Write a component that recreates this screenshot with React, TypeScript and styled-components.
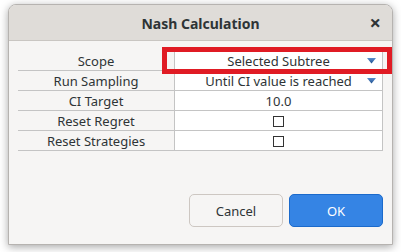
import React from 'react';
import styled, { createGlobalStyle } from 'styled-components';

const color = {
	'header': '#dfdcd8',
	'body': '#f6f5f4',
	'grid': '#c4c4c4',
	'text': '#2e3436',
	'blue': '#3584e4',
	'red': '#e01b24',
};

const Global = createGlobalStyle`
	html, body {
		margin: 0;
		padding: 0;
		background: #ffffff;
	}
	body {
		font-family: "Noto Sans", "Open Sans", sans-serif;
		color: ${ color.text };
	}
`;

const Page = styled.div`
	width: 401px;
	height: 252px;
	padding: 4px 0px 0px 8px;
	box-sizing: border-box;
`;

const Dialog = styled.div`
	position: relative;
	display: flex;
	flex-direction: column;
	width: 385px;
	height: 241px;
	box-sizing: border-box;
	border: 1px solid #b6b3b0;
	border-radius: 8px 8px 0px 0px;
	background-color: ${ color.body };
	box-shadow: 0px 2px 8px rgba(0, 0, 0, 0.35);
	overflow: hidden;
`;

const Header = styled.div`
	position: relative;
	display: flex;
	align-items: center;
	justify-content: center;
	height: 36px;
	padding-top: 1px;
	box-sizing: border-box;
	flex: none;
	background-color: ${ color.header };
	border-bottom: 1px solid #c9c6c2;
	font-size: 14px;
	font-weight: bold;
	color: #2e3436;
`;

const Close = styled.span`
	position: absolute;
	right: 11px;
	top: 8px;
	font-size: 20px;
	line-height: 20px;
	font-weight: bold;
	color: #2e3436;
`;

const Body = styled.div`
	display: flex;
	flex-direction: column;
	flex: 1;
	padding: 10px 9px 17px 9px;
`;

const Table = styled.div`
	display: grid;
	grid-template-columns: 156px 209px;
	grid-auto-rows: 20px;
`;

const Label = styled.div`
	display: flex;
	align-items: center;
	justify-content: center;
	padding-top: 1px;
	box-sizing: border-box;
	border-bottom: 1px solid ${ color.grid };
	font-size: 13px;
	line-height: 13px;
`;

const Value = styled.div<{ $first?: boolean }>`
	position: relative;
	display: flex;
	align-items: center;
	justify-content: center;
	padding-top: 1px;
	box-sizing: border-box;
	background-color: #ffffff;
	border-left: 1px solid ${ color.grid };
	border-right: 1px solid ${ color.grid };
	border-bottom: 1px solid ${ color.grid };
	border-top: ${ (p) => p.$first ? `1px solid ${ color.grid }` : 'none' };
	font-size: 13px;
	line-height: 13px;
`;

const Arrow = styled.svg`
	position: absolute;
	right: 6px;
	top: 50%;
	margin-top: -3px;
`;

const Check = styled.span`
	display: block;
	width: 11px;
	height: 11px;
	box-sizing: border-box;
	border: 1px solid #333333;
	background: #ffffff;
`;

const Buttons = styled.div`
	display: flex;
	justify-content: flex-end;
	gap: 6px;
	margin-top: auto;
`;

const Button = styled.div<{ $primary?: boolean }>`
	display: flex;
	align-items: center;
	justify-content: center;
	width: 94px;
	height: 33px;
	box-sizing: border-box;
	border-radius: 5px;
	font-size: 13px;
	border: 1px solid ${ (p) => p.$primary ? '#1b6acb' : '#cdc7c2' };
	background: ${ (p) => p.$primary ? color.blue : '#f6f5f4' };
	color: ${ (p) => p.$primary ? '#ffffff' : color.text };
`;

const Highlight = styled.div`
	position: absolute;
	left: 153px;
	top: 42px;
	width: 230px;
	height: 27px;
	box-sizing: border-box;
	border: 5px solid ${ color.red };
	pointer-events: none;
`;

function DropArrow() {
	return (
		<Arrow width="9" height="6" viewBox="0 0 9 6">
			<defs>
				<linearGradient id="ag" x1="0" y1="0" x2="0" y2="1">
					<stop offset="0" stopColor="#5b8fd0"/>
					<stop offset="1" stopColor="#1f4f8c"/>
				</linearGradient>
			</defs>
			<polygon points="0,0 9,0 4.5,5.5" fill="url(#ag)"/>
		</Arrow>
	);
}

function App() {
	return (
		<Page>
			<Global/>
			<Dialog>
				<Header>
					Nash Calculation
					<Close>×</Close>
				</Header>
				<Body>
					<Table>
						<Label>Scope</Label>
						<Value $first>Selected Subtree<DropArrow/></Value>
						<Label>Run Sampling</Label>
						<Value>Until CI value is reached<DropArrow/></Value>
						<Label>CI Target</Label>
						<Value>10.0</Value>
						<Label>Reset Regret</Label>
						<Value><Check/></Value>
						<Label>Reset Strategies</Label>
						<Value><Check/></Value>
					</Table>
					<Buttons>
						<Button>Cancel</Button>
						<Button $primary>OK</Button>
					</Buttons>
				</Body>
				<Highlight/>
			</Dialog>
		</Page>
	);
}

export default App;
